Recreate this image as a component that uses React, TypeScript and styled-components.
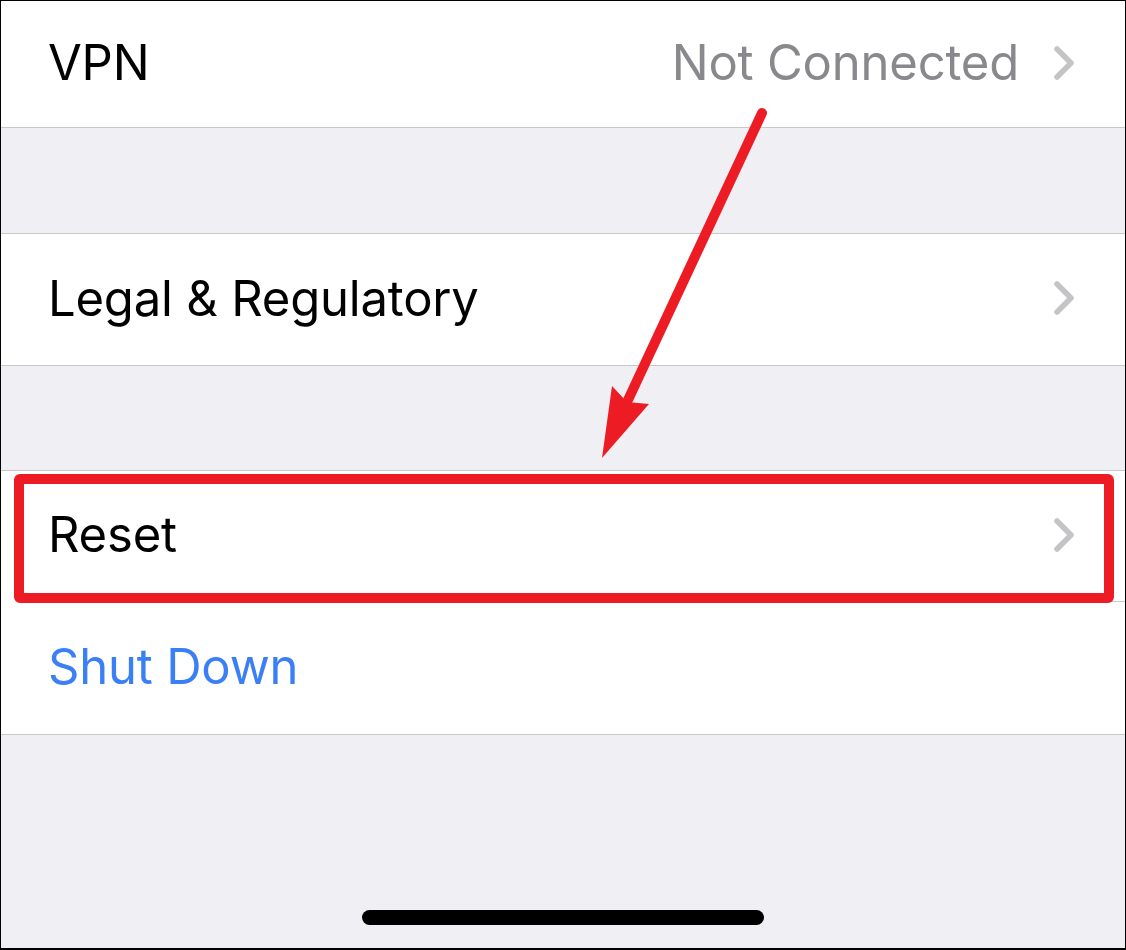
import { createGlobalStyle, styled } from "styled-components";

const GlobalStyle = createGlobalStyle`
  html, body {
    margin: 0;
    padding: 0;
    background: #ffffff;
  }
  * {
    box-sizing: border-box;
  }
`;

const Frame = styled.div`
  position: relative;
  width: 1126px;
  height: 950px;
  border: 1px solid #000;
  border-bottom-width: 2px;
  background: #f0eff4;
  display: flex;
  flex-direction: column;
  overflow: hidden;
  font-family: Inter, "Noto Sans", "Liberation Sans", sans-serif;
`;

const Group = styled.div<{ $gap: number; $topLine?: boolean }>`
  margin-top: ${(p) => p.$gap}px;
  background: #ffffff;
  border-top: ${(p) => (p.$topLine ? "1.5px solid #c8c7cc" : "none")};
  border-bottom: 1.5px solid #c8c7cc;
`;

const Row = styled.div`
  padding-left: 47px;
`;

const RowInner = styled.div<{ $height: number; $line?: boolean }>`
  height: ${(p) => p.$height}px;
  display: flex;
  align-items: center;
  padding-right: 50px;
  padding-bottom: 3px;
  border-bottom: ${(p) => (p.$line ? "1.5px solid #c8c7cc" : "none")};
`;

const Label = styled.span<{ $blue?: boolean }>`
  flex: 1;
  font-size: 49px;
  letter-spacing: -0.2px;
  color: ${(p) => (p.$blue ? "#3a7ff6" : "#000000")};
`;

const Detail = styled.span`
  font-size: 49px;
  letter-spacing: -0.2px;
  color: #89898d;
  margin-right: 34px;
`;

const Filler = styled.div`
  flex: 1;
  display: flex;
  align-items: flex-end;
  justify-content: center;
  padding-bottom: 23px;
`;

const HomeBar = styled.div`
  width: 402px;
  height: 15px;
  border-radius: 8px;
  background: #000;
`;

const Highlight = styled.div`
  position: absolute;
  left: 13px;
  top: 473px;
  width: 1100px;
  height: 129px;
  border: 10px solid #ed1c24;
  border-radius: 6px;
  pointer-events: none;
`;

const ArrowLayer = styled.svg`
  position: absolute;
  left: -1px;
  top: -1px;
  pointer-events: none;
`;

function Chevron() {
  return (
    <svg width="22" height="36" viewBox="0 0 22 36">
      <polyline
        points="4,4 18,18 4,32"
        fill="none"
        stroke="#c4c4c7"
        strokeWidth="5.5"
        strokeLinecap="round"
        strokeLinejoin="round"
      />
    </svg>
  );
}

function Arrow() {
  return (
    <ArrowLayer width="1126" height="950" viewBox="0 0 1126 950">
      <line
        x1="762"
        y1="113"
        x2="628"
        y2="400"
        stroke="#ed1c24"
        strokeWidth="10"
        strokeLinecap="round"
      />
      <polygon points="602,458 612,386 627,402 649,404" fill="#ed1c24" />
    </ArrowLayer>
  );
}

export default function App() {
  return (
    <>
      <GlobalStyle />
      <Frame>
        <Group $gap={0}>
          <Row>
            <RowInner $height={126}>
              <Label>VPN</Label>
              <Detail>Not Connected</Detail>
              <Chevron />
            </RowInner>
          </Row>
        </Group>

        <Group $gap={105} $topLine>
          <Row>
            <RowInner $height={131}>
              <Label>Legal &amp; Regulatory</Label>
              <Chevron />
            </RowInner>
          </Row>
        </Group>

        <Group $gap={104} $topLine>
          <Row>
            <RowInner $height={131} $line>
              <Label>Reset</Label>
              <Chevron />
            </RowInner>
          </Row>
          <Row>
            <RowInner $height={132}>
              <Label $blue>Shut Down</Label>
            </RowInner>
          </Row>
        </Group>

        <Filler>
          <HomeBar />
        </Filler>

        <Highlight />
        <Arrow />
      </Frame>
    </>
  );
}
